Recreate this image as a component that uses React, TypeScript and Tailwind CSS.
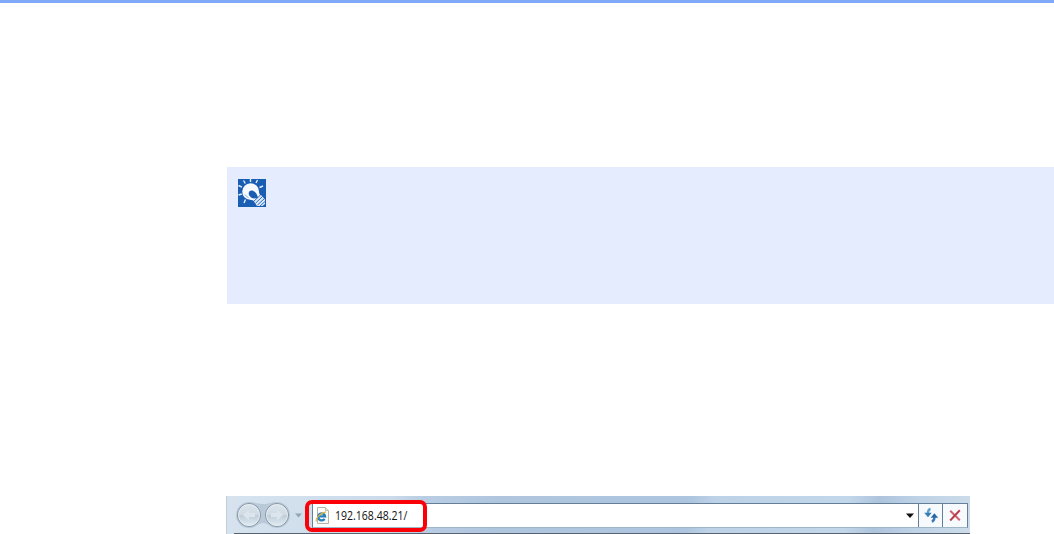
const TipIcon = () => (
  <svg className="block h-7 w-7" viewBox="0 0 28 28" fill="none">
    <rect width="28" height="28" fill="#1a5eb4" />
    <g stroke="#e4eefb" strokeWidth="1.4">
      <path d="M12.5 0v3M5.5 1.500l1.800 3M.5 6.500l3.400 1.700M.5 16l3.300-1M6 24l1.500-3.500M19.5 1L18 4M25 7l-3.500 1.500" />
    </g>
    <path
      d="M12.500 4.200A8.500 8.500 0 0 0 4.200 12.500a8.300 8.300 0 0 0 7.800 8.300c2 .2 3.500.7 4.800 2.200l1.500 1.800 6.500-6-2.300-2.500c-1.200-1.200-1.400-2-1.500-3.800a8.500 8.500 0 0 0-8.500-8.300z"
      fill="#f6faff"
    />
    <path d="M7 15.500a6.500 6.500 0 0 0 3.500 3" stroke="#7fa6d8" strokeWidth=".9" />
    <path d="M10.700 14.500c0-2.300 2.300-3.700 4.700-2.500 2.700 1.300 3.900 3.700 4.600 6.700-3 1-5.200.9-6.900-.3-1.300-1-2.400-2.300-2.400-3.900z" fill="#1a5eb4" />
    <path d="M16 22.500l7-6.500 4 4.500v4.500L24.500 27H19z" fill="#dce8f7" />
    <path d="M17.500 24.200l7-6.700M19.500 26l7-6.500M22 27l5-4.500M15.500 22.500l7-6.500" stroke="#1a5eb4" strokeWidth=".9" />
  </svg>
);

const NavButtons = () => (
  <svg className="block h-7 w-[55px] shrink-0" viewBox="0 0 55 28" fill="none">
    <defs>
      <linearGradient id="disc" x1="0" y1="0" x2="0" y2="1">
        <stop offset="0" stopColor="#dce5ec" />
        <stop offset=".48" stopColor="#cfdae3" />
        <stop offset=".52" stopColor="#c0ced9" />
        <stop offset="1" stopColor="#e2edf4" />
      </linearGradient>
    </defs>
    <path d="M13 1c6 0 8 2 14 2s8-2 14-2a13 13 0 0 1 0 26c-7 0-9-5-14-5s-7 5-14 5A13 13 0 0 1 13 1z" fill="#b9c9d7" />
    <circle cx="13" cy="14" r="11.500" fill="url(#disc)" stroke="#8495a3" />
    <circle cx="13" cy="14" r="10.500" stroke="#e9f0f5" strokeWidth=".8" />
    <circle cx="41" cy="14" r="11.500" fill="url(#disc)" stroke="#8495a3" />
    <circle cx="41" cy="14" r="10.500" stroke="#e9f0f5" strokeWidth=".8" />
    <path d="M7 14l6-5.500V12h6v4h-6v3.500zM47 14l-6-5.500V12h-6v4h6v3.500z" fill="#dbe5ed" />
  </svg>
);

const PageIcon = () => (
  <svg className="block h-[17px] w-[15px] shrink-0" viewBox="0 0 15 17" fill="none">
    <path d="M2.500.5h8l3 3v13h-11z" fill="#fbfbf8" stroke="#b5b4aa" />
    <path d="M10.500.5v3h3" fill="#e6e5da" stroke="#b5b4aa" strokeWidth=".8" />
    <path d="M9.600 11.800a3.500 3.500 0 1 1 .5-2.500H4" stroke="#247fbd" strokeWidth="2.200" />
    <path d="M1.500 14.500C0 12 5 6 11 4.800" stroke="#e4b93c" strokeWidth="1.300" />
  </svg>
);

const RefreshIcon = () => (
  <svg className="block h-4 w-4" viewBox="0 0 16 16" fill="none">
    <path d="M7.500 2C5.500 2.500 4.800 4 5 6.500" stroke="#5c9fce" strokeWidth="2.400" />
    <path d="M1.200 5.700h7.600L5 10.200z" fill="#347fba" />
    <path d="M8.800 14.500c2-.5 2.700-2 2.600-4.500" stroke="#3b77b5" strokeWidth="2.400" />
    <path d="M7.600 10.700h7.600l-3.800-4.500z" fill="#2868a9" />
  </svg>
);

const AddressBar = () => (
  <div className="relative flex h-[38px] w-[744px] flex-col border-l border-[#c2ced8] bg-[linear-gradient(100deg,#d6e3ef_0%,#cbdbea_22%,#b9cee3_26%,#b0c6df_36%,#aec5df_62%,#bdd2e7_65%,#c3d7ea_83%,#adc4dd_87%,#bed2e6_92%,#ccdcea_100%)]">
    <div className="flex h-[37px] items-center pl-[9px] pt-px">
      <NavButtons />
      <svg className="ml-[4px] h-1.5 w-[7px] shrink-0" viewBox="0 0 7 6">
        <path d="M0 1.500h7L3.500 5.500z" fill="#93a6b5" />
      </svg>
      <div className="ml-[10px] flex h-[25px] w-[656px] items-center border border-[#657f98] border-b-[#9fb5c8] bg-white">
        <div className="flex flex-1 items-center pl-0.5">
          <PageIcon />
          <span className="ml-[5px] inline-block origin-left scale-x-[.81] font-['Open_Sans',sans-serif] text-[13px] leading-5 text-[#111]">
            192.168.48.21/
          </span>
        </div>
        <svg className="mr-[4px] h-[5px] w-2" viewBox="0 0 8 5">
          <path d="M0 .5h8L4 5z" fill="#111" />
        </svg>
        <div className="flex h-full w-[24px] items-center justify-center border-l border-[#657f98] bg-[#f7fafd]">
          <RefreshIcon />
        </div>
        <div className="flex h-full w-[25px] items-center justify-center border-l border-[#657f98] bg-[#f7fafd]">
          <svg className="block h-3 w-3" viewBox="0 0 12 12" fill="none">
            <path d="M1.200 1.700l9.600 9.600" stroke="#d0606c" strokeWidth="2" />
            <path d="M10.800 1.200L1.200 11.500" stroke="#b93c4c" strokeWidth="2" />
          </svg>
        </div>
      </div>
    </div>
    <div className="ml-[7px] h-px bg-[#59636f]" />
    {/* highlight around the typed address */}
    <div className="absolute left-[78px] top-[4px] h-8 w-[122px] rounded-[7px] border-4 border-[#fb0006]" />
  </div>
);

export default function App() {
  return (
    <main className="h-[534px] w-full overflow-hidden border-t-[3px] border-[#80a9f9] bg-white pl-[227px] pt-[164px]">
      <section className="h-[137px] bg-[#e5ecfd] pl-[11px] pt-3">
        <TipIcon />
      </section>
      <div className="-ml-px mt-48">
        <AddressBar />
      </div>
    </main>
  );
}
